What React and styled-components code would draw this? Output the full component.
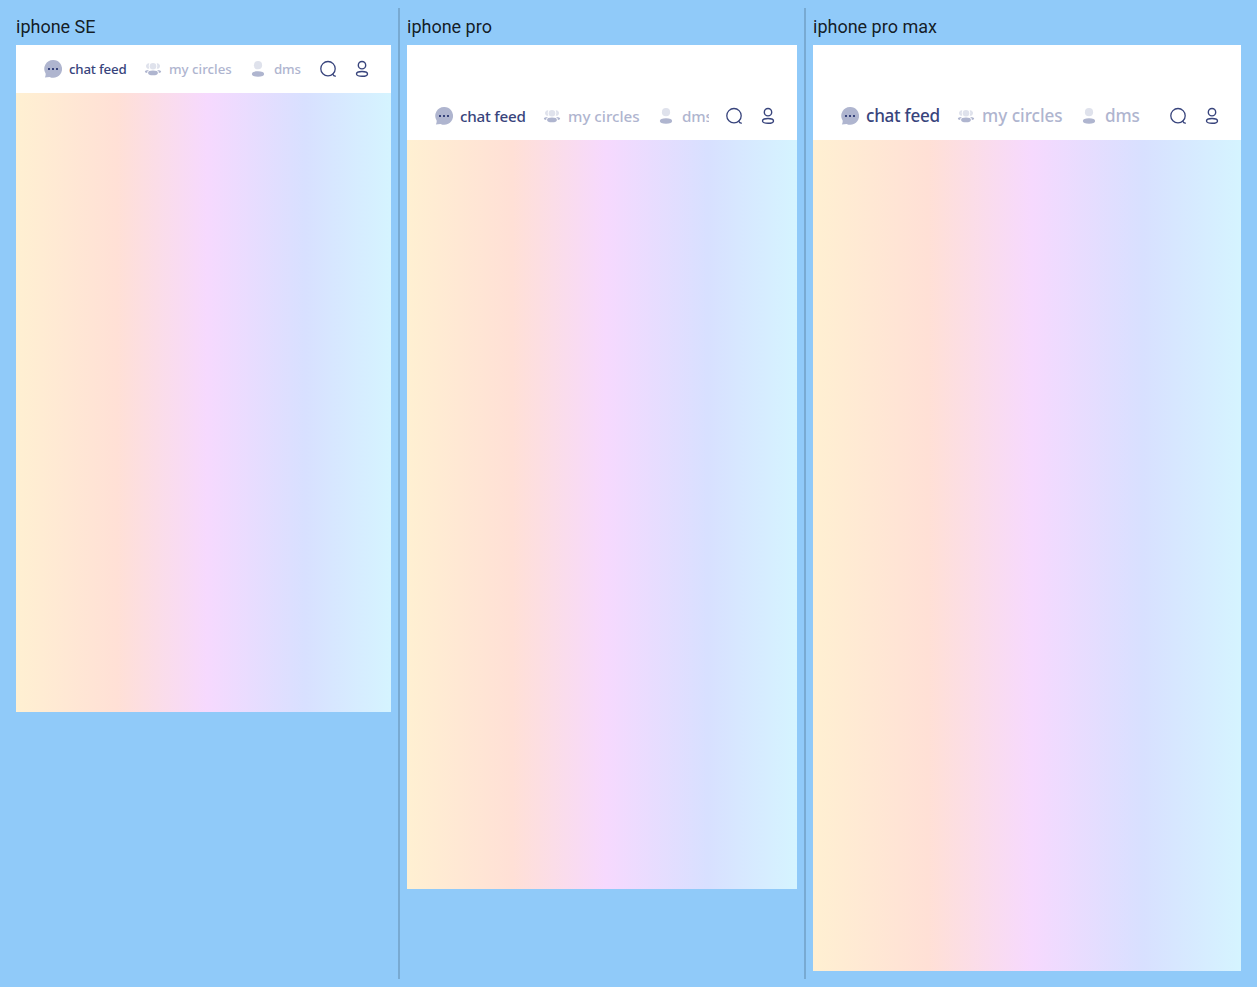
import React from "react";
import styled, { createGlobalStyle } from "styled-components";

const GlobalStyle = createGlobalStyle`
  * { box-sizing: border-box; }
  body { margin: 0; background: #90caf9; }
`;

const Board = styled.main`
  display: flex;
  align-items: flex-start;
  height: 987px;
  padding: 8px;
  overflow: hidden;
`;

const Column = styled.section`
  flex: none;
  height: 971px;
  padding: 8px 7px 0 ${(p) => (p.$first ? 8 : 7)}px;
  border-left: ${(p) => (p.$first ? "none" : "2px solid #78aad2")};
`;

const DeviceName = styled.h2`
  margin: 0;
  height: 29px;
  font: 400 18px/22px Roboto, sans-serif;
  color: rgba(0, 0, 0, 0.87);
  white-space: nowrap;
`;

const Screen = styled.div`
  display: flex;
  flex-direction: column;
  width: ${(p) => p.$width}px;
  height: ${(p) => p.$height}px;
  background: linear-gradient(90deg, #fff0d2 0%, #ffe0d6 27%, #f6d9fe 51%, #d8e0ff 77%, #d5f4ff 100%);
`;

const Header = styled.header`
  display: flex;
  padding: ${(p) => p.$inset}px 20px 0 28px;
  background: #fff;
`;

const Tabs = styled.nav`
  display: flex;
  flex: 1;
  min-width: 0;
  height: 48px;
  gap: 17px;
  overflow: hidden;
`;

const Tab = styled.div`
  display: flex;
  flex: none;
  align-items: center;
  gap: 7px;
  color: ${(p) => (p.$active ? "#38447c" : "#afb5cf")};
`;

const TabLabel = styled.span`
  width: ${(p) => p.$width}px;
  font-family: "Noto Sans", sans-serif;
  font-size: ${(p) => p.$size}px;
  font-weight: 500;
  line-height: 24px;
  letter-spacing: ${(p) => p.$spacing}em;
  white-space: nowrap;
`;

const Actions = styled.div`
  display: flex;
  align-items: center;
  flex: none;
  gap: 16px;
  height: 48px;
  margin-left: 16px;
`;

const Icon = styled.svg`
  display: block;
  flex: none;
  width: 18px;
  height: 18px;
`;

const ChatIcon = () => (
  <Icon viewBox="0 0 18 18">
    <path d="M9.2 0a8.8 8.9 0 1 1-3.6 17Q3.2 17.1.9 17.5Q1.8 15.6 1.7 13.7A8.8 8.9 0 0 1 9.2 0Z" fill="#afb5cf" />
    <path d="M4 8h2v2H4zM8 8h2v2H8zM12 8h2v2h-2z" fill="#38447c" />
  </Icon>
);

const CirclesIcon = () => (
  <Icon viewBox="0 0 18 18">
    <g fill="#dfe2ec">
      <circle cx="9" cy="6.2" r="3.3" />
      <path d="M5.3 3.3A2.8 2.8 0 1 0 5.3 8.8Q4 6.2 5.3 3.3ZM12.7 3.3A2.8 2.8 0 1 1 12.7 8.8Q14 6.2 12.7 3.3Z" />
    </g>
    <g fill="#afb5cf">
      <ellipse cx="9" cy="12.9" rx="4.9" ry="2.4" />
      <path d="M5 10Q3.1 10.7 3.1 13Q.8 12.6.8 11.5Q1.1 9.8 5 10ZM13 10Q14.9 10.7 14.9 13Q17.2 12.6 17.2 11.5Q16.9 9.8 13 10Z" />
    </g>
  </Icon>
);

const PersonIcon = () => (
  <Icon viewBox="0 0 18 18">
    <circle cx="9" cy="5.2" r="4.1" fill="#dfe2ec" />
    <path d="M9 11.3c4 0 6.1.8 6.1 2.7S13 16.7 9 16.7 2.9 15.9 2.9 14 5 11.3 9 11.3Z" fill="#afb5cf" />
  </Icon>
);

const SearchIcon = () => (
  <Icon viewBox="0 0 18 18" fill="none" stroke="#38447c" strokeWidth="1.3" strokeLinecap="round">
    <circle cx="9" cy="8.7" r="7.2" />
    <path d="M13.8 14.3Q14.7 16.3 16.4 16.1" />
  </Icon>
);

const ProfileIcon = () => (
  <Icon viewBox="0 0 18 18" fill="none" stroke="#38447c" strokeWidth="1.4">
    <circle cx="9" cy="5.2" r="3.7" />
    <ellipse cx="9" cy="13.9" rx="5.5" ry="2.4" />
  </Icon>
);

const tabs = [
  { label: "chat feed", Glyph: ChatIcon },
  { label: "my circles", Glyph: CirclesIcon },
  { label: "dms", Glyph: PersonIcon },
];

const devices = [
  { name: "iphone SE", width: 375, height: 667, inset: 0, size: 13.3, widths: [58, 63, 27] },
  { name: "iphone pro", width: 390, height: 844, inset: 47, size: 15.2, widths: [66, 72, 31] },
  { name: "iphone pro max", width: 428, height: 926, inset: 47, size: 17.1, widths: [74, 81, 35] },
];

const spacings = [-0.015, 0, -0.01];

function Device({ name, width, height, inset, size, widths, first }) {
  return (
    <Column $first={first}>
      <DeviceName>{name}</DeviceName>
      <Screen $width={width} $height={height}>
        <Header $inset={inset}>
          <Tabs>
            {tabs.map(({ label, Glyph }, i) => (
              <Tab key={label} $active={i === 0}>
                <Glyph />
                <TabLabel $size={size} $width={widths[i]} $spacing={spacings[i]}>{label}</TabLabel>
              </Tab>
            ))}
          </Tabs>
          <Actions>
            <SearchIcon />
            <ProfileIcon />
          </Actions>
        </Header>
      </Screen>
    </Column>
  );
}

export default function App() {
  return (
    <>
      <GlobalStyle />
      <Board>
        {devices.map((device, i) => (
          <Device key={device.name} {...device} first={i === 0} />
        ))}
      </Board>
    </>
  );
}
